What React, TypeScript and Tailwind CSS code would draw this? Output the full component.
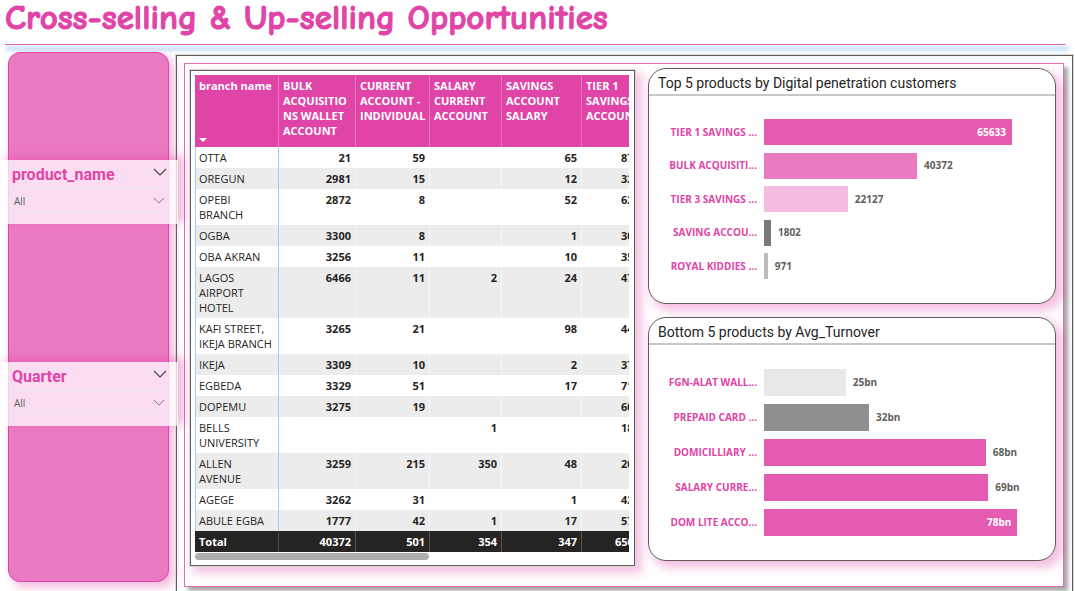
import React from "react";

type Row = { branch: string; values: string[] };

const columns = [
  "BULK ACQUISITIO NS WALLET ACCOUNT",
  "CURRENT ACCOUNT - INDIVIDUAL",
  "SALARY CURRENT ACCOUNT",
  "SAVINGS ACCOUNT SALARY",
  "TIER 1 SAVINGS ACCOUNT",
];

const rows: Row[] = [
  { branch: "OTTA", values: ["21", "59", "", "65", "87"] },
  { branch: "OREGUN", values: ["2981", "15", "", "12", "32"] },
  { branch: "OPEBI BRANCH", values: ["2872", "8", "", "52", "62"] },
  { branch: "OGBA", values: ["3300", "8", "", "1", "30"] },
  { branch: "OBA AKRAN", values: ["3256", "11", "", "10", "35"] },
  { branch: "LAGOS AIRPORT HOTEL", values: ["6466", "11", "2", "24", "47"] },
  { branch: "KAFI STREET, IKEJA BRANCH", values: ["3265", "21", "", "98", "44"] },
  { branch: "IKEJA", values: ["3309", "10", "", "2", "37"] },
  { branch: "EGBEDA", values: ["3329", "51", "", "17", "71"] },
  { branch: "DOPEMU", values: ["3275", "19", "", "", "60"] },
  { branch: "BELLS UNIVERSITY", values: ["", "", "1", "", "18"] },
  { branch: "ALLEN AVENUE", values: ["3259", "215", "350", "48", "20"] },
  { branch: "AGEGE", values: ["3262", "31", "", "1", "42"] },
  { branch: "ABULE EGBA", values: ["1777", "42", "1", "17", "57"] },
];

const totals = ["40372", "501", "354", "347", "650"];

type Bar = { label: string; value: string; percent: number; color: string; inside?: boolean };

const topProducts: Bar[] = [
  { label: "TIER 1 SAVINGS ...", value: "65633", percent: 85.2, color: "bg-[#e55bb1]", inside: true },
  { label: "BULK ACQUISITI...", value: "40372", percent: 52.6, color: "bg-[#ea7bc1]" },
  { label: "TIER 3 SAVINGS ...", value: "22127", percent: 28.8, color: "bg-[#f4bde0]" },
  { label: "SAVING ACCOU...", value: "1802", percent: 2.4, color: "bg-[#7a7a7a]" },
  { label: "ROYAL KIDDIES ...", value: "971", percent: 1.3, color: "bg-[#bdbdbd]" },
];

const bottomProducts: Bar[] = [
  { label: "FGN-ALAT WALL...", value: "25bn", percent: 28.1, color: "bg-[#e8e8e8]" },
  { label: "PREPAID CARD ...", value: "32bn", percent: 36.1, color: "bg-[#8f8f8f]" },
  { label: "DOMICILLIARY ...", value: "68bn", percent: 76.2, color: "bg-[#e55bb1]" },
  { label: "SALARY CURRE...", value: "69bn", percent: 77.1, color: "bg-[#e55bb1]" },
  { label: "DOM LITE ACCO...", value: "78bn", percent: 87.1, color: "bg-[#e55bb1]", inside: true },
];

function Chevron({ className }: { className: string }) {
  return (
    <svg viewBox="0 0 14 8" className={className} fill="none" stroke="currentColor" strokeWidth="1.1" aria-hidden="true">
      <path d="M1 1l6 6 6-6" />
    </svg>
  );
}

function Slicer({ name }: { name: string }) {
  return (
    <section className="relative z-10 -mr-[10px] -ml-2 h-16 bg-white/75 pr-[10px] pl-[7px] shadow-[5px_-3px_8px_1px_rgba(226,67,167,0.35)]">
      <div className="flex h-[29px] items-center justify-between border-b border-[#e3e3ea]/80 pr-px pl-1">
        <h2 className="pt-[2px] font-['Roboto',sans-serif] text-base font-bold text-[#e044a7]">{name}</h2>
        <button aria-label={`Collapse ${name}`} className="text-[#444]">
          <Chevron className="mb-1 h-2 w-[14px]" />
        </button>
      </div>
      <button
        aria-label={`${name} filter`}
        className="flex h-[23px] w-full items-center justify-between border-b border-[#e3e3ea]/80 pr-[3px] pl-[6px] font-['Open_Sans',sans-serif] text-[10px] text-[#605e5c]"
      >
        <span className="pt-[3px]">All</span>
        <Chevron className="h-[7px] w-3 text-[#777]" />
      </button>
    </section>
  );
}

function BarChart({
  title,
  bars,
  barClass,
  listClass,
}: {
  title: string;
  bars: Bar[];
  barClass: string;
  listClass: string;
}) {
  return (
    <section className="rounded-[18px] border border-[#605e5c] bg-white shadow-[5px_5px_9px_2px_rgba(226,67,167,0.33)]">
      <h2 className="flex h-[27px] items-center border-b-2 border-[#c8c8c8] pt-1 pl-[9px] font-['Roboto',sans-serif] text-[14px] text-[#252423]">
        {title}
      </h2>
      <ul
        className={`flex flex-col justify-between pb-6 font-['Open_Sans',sans-serif] text-[10px] font-bold ${listClass}`}
      >
        {bars.map((bar) => (
          <li key={bar.label} className={`flex items-center ${barClass}`}>
            <span className="w-[115px] shrink-0 pr-[7px] text-right whitespace-nowrap text-[#e044a7]">{bar.label}</span>
            <div className="flex h-full flex-1 items-center gap-[7px]">
              <div
                className={`flex h-full shrink-0 items-center justify-end text-white ${bar.inside ? "pr-[6px]" : ""} ${bar.color}`}
                style={{ width: `${bar.percent}%` }}
              >
                {bar.inside ? bar.value : null}
              </div>
              {bar.inside ? null : <span className="text-[#605e5c]">{bar.value}</span>}
            </div>
          </li>
        ))}
      </ul>
    </section>
  );
}

function BranchTable() {
  return (
    <section className="border border-[#605e5c] bg-white py-1 pr-[5px] pb-[5px] pl-1 shadow-[5px_5px_9px_2px_rgba(226,67,167,0.33)] outline outline-[#d8d8d8]">
      <div className="overflow-hidden">
        <table className="w-[458px] table-fixed border-separate border-spacing-0 font-['Open_Sans',sans-serif] text-[11px] leading-[15px] text-[#252423]">
          <colgroup>
            <col className="w-[84px]" />
            <col className="w-[77px]" />
            <col className="w-[74px]" />
            <col className="w-[72px]" />
            <col className="w-[80px]" />
            <col className="w-[71px]" />
          </colgroup>
          <thead>
            <tr className="h-[72px] bg-[#e044a7] text-left align-top text-white">
              <th className="relative border-r border-[#ea78c0] pt-[3px] pl-1 font-bold">
                branch name
                <svg viewBox="0 0 8 4" className="absolute bottom-[5px] left-1 h-1 w-2" fill="currentColor" aria-hidden="true">
                  <path d="M0 0h8L4 4z" />
                </svg>
              </th>
              {columns.map((column) => (
                <th key={column} className="border-r border-[#ea78c0] pt-[3px] pl-1 font-bold">
                  {column}
                </th>
              ))}
            </tr>
          </thead>
          <tbody>
            {rows.map((row) => (
              <tr key={row.branch} className="align-top even:bg-[#ececec]">
                <th className="border-r border-l border-[#a5cdee] py-[3px] pr-1 pl-[3px] text-left font-normal">
                  {row.branch}
                </th>
                {row.values.map((value, index) => (
                  <td
                    key={index}
                    className={
                      index === 4
                        ? "py-[3px] pl-[39px] text-left font-bold"
                        : "border-r border-white/50 py-[3px] pr-1 text-right font-bold"
                    }
                  >
                    {value}
                  </td>
                ))}
              </tr>
            ))}
          </tbody>
          <tfoot>
            <tr className="bg-[#252423] font-bold text-white">
              <th className="border-r border-[#3b4a5c] py-[3px] pl-1 text-left">Total</th>
              {totals.map((value, index) => (
                <td
                  key={index}
                  className={index === 4 ? "py-[3px] pl-[33px] text-left" : "border-r border-[#555] py-[3px] pr-1 text-right"}
                >
                  {value}
                </td>
              ))}
            </tr>
          </tfoot>
        </table>
      </div>
      <div className="mt-px h-[7px] w-[54%] rounded-full bg-[#b0aeac]" />
    </section>
  );
}

export default function App() {
  return (
    <div className="flex min-h-screen flex-col overflow-hidden bg-white">
      <header className="pr-[9px] pl-[5px]">
        <h1 className="h-11 font-['Comic_Sans_MS','Comic_Neue','Open_Sans',sans-serif] text-[35px] leading-[36px] font-bold whitespace-nowrap text-[#e044a7] [-webkit-text-stroke:1px_#e044a7]">
          Cross-selling &amp; Up-selling Opportunities
        </h1>
        <div className="h-px bg-[#e36bb5] shadow-[2px_4px_4px_1px_#a4cef0]" />
      </header>
      <main className="flex flex-1 gap-[7px] pt-[7px] pr-[2px] pl-2">
        <aside className="mb-[10px] flex w-[161px] shrink-0 flex-col gap-[138px] rounded-[12px] border border-[#e044a7] bg-[#ea7ac1] pt-[107px] shadow-[5px_5px_8px_1px_rgba(226,67,167,0.33)]">
          <Slicer name="product_name" />
          <Slicer name="Quarter" />
        </aside>
        <div className="mt-[3px] flex-1 border border-b-0 border-[#605e5c] pt-[7px] pr-2 pb-[5px] pl-[7px] outline outline-[#d8d8d8]">
          <div className="grid grid-cols-[445fr_408fr] items-start gap-[13px] border border-[#e36bb5] pt-1 pr-[7px] pb-5 pl-[5px] shadow-[4px_4px_4px_rgba(0,0,0,0.35)]">
            <div className="min-w-0 pt-[2px]">
              <BranchTable />
            </div>
            <div className="flex flex-col gap-[13px]">
              <BarChart
                title="Top 5 products by Digital penetration customers"
                bars={topProducts}
                barClass="h-[26px]"
                listClass="h-[207px] pt-[23px]"
              />
              <BarChart
                title="Bottom 5 products by Avg_Turnover"
                bars={bottomProducts}
                barClass="h-[27px]"
                listClass="h-[215px] pt-6"
              />
            </div>
          </div>
        </div>
      </main>
    </div>
  );
}
